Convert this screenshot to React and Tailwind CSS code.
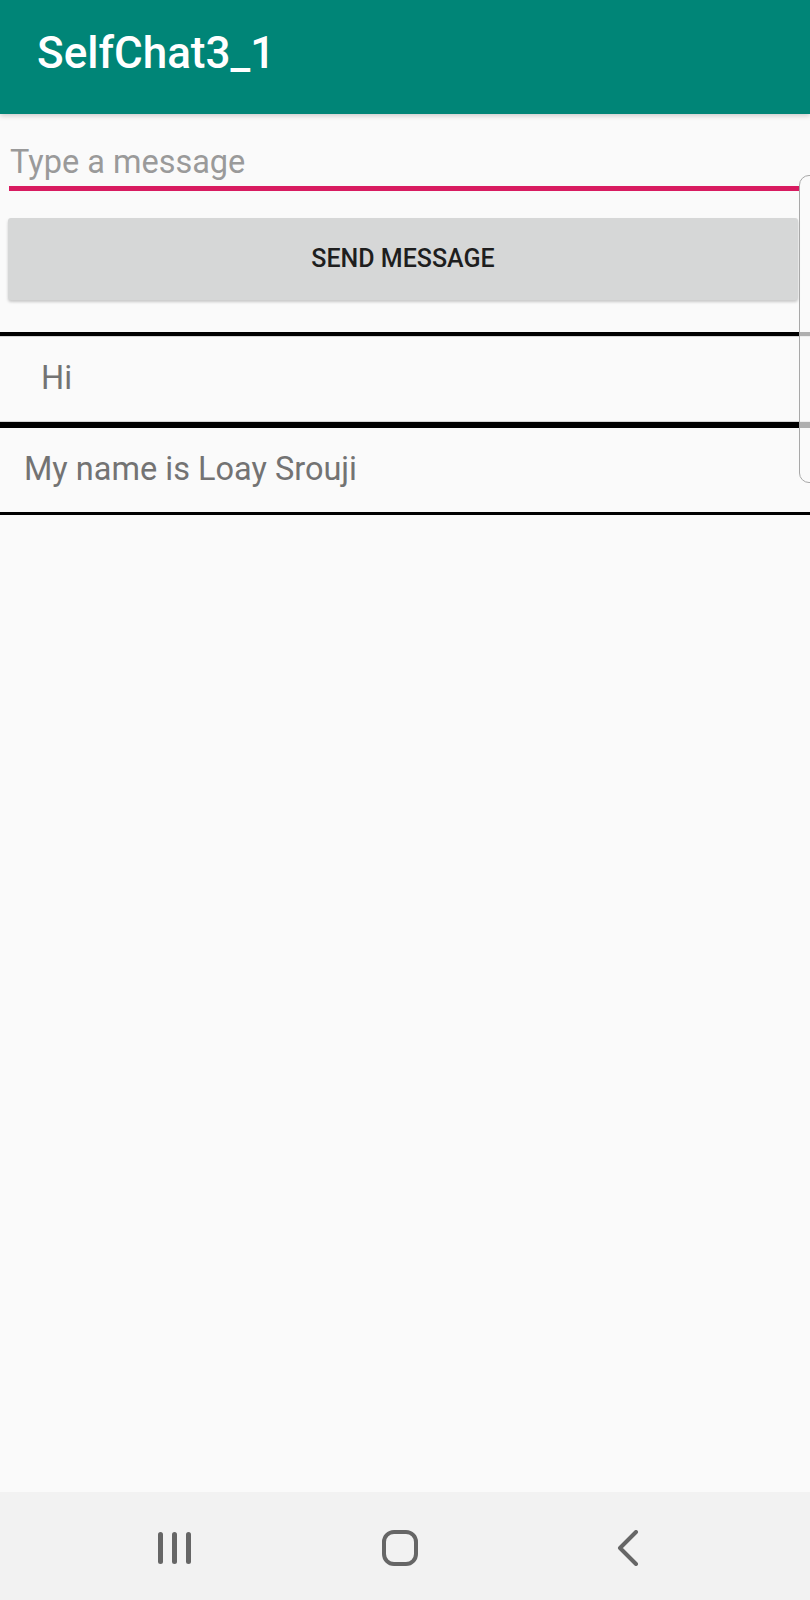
import React from "react";

export default function App() {
  return (
    <div
      className="relative flex min-h-screen flex-col overflow-hidden bg-[#fafafa]"
      style={{ fontFamily: "Roboto, 'Noto Sans', sans-serif" }}
    >
      {/* App bar */}
      <header className="relative z-10 h-[114px] bg-[#008577] pl-[37px] pt-[31px] shadow-[0_2px_5px_rgba(0,0,0,0.18)]">
        <h1 className="text-[44px] font-medium leading-none text-white">SelfChat3_1</h1>
      </header>

      <main className="flex-1">
        {/* Edit text */}
        <div className="ml-[9px] mr-[11px] mt-[32px]">
          <div className="pl-px text-[32.5px] leading-none text-[#9a9a9a]">Type a message</div>
          <div className="mt-[7px] h-[5px] bg-[#d81b60]" />
        </div>

        {/* Button */}
        <div className="ml-[8px] mr-[12px] mt-[27px]">
          <button className="flex h-[82px] w-full items-center justify-center rounded-[3px] bg-[#d6d7d7] text-[25px] font-medium leading-none text-[#1e1e1e] shadow-[0_2px_3px_rgba(0,0,0,0.2)]">
            SEND MESSAGE
          </button>
        </div>

        {/* List */}
        <div className="mt-[32px]">
          <div className="h-[4px] bg-black" />
          <div className="h-px bg-[#d4d4d4]" />
          <div className="flex h-[84px] items-center pl-[41px] text-[32.5px] leading-none text-[#737373]">Hi</div>
          <div className="h-px bg-[#d4d4d4]" />
          <div className="h-[6px] bg-black" />
          <div className="flex h-[84px] items-center pl-[24px] text-[32.5px] leading-none text-[#737373]">
            My name is Loay Srouji
          </div>
          <div className="h-[3px] bg-black" />
        </div>
      </main>

      {/* Navigation bar */}
      <nav className="flex h-[108px] items-center bg-[#f2f2f2] pt-[4px]">
        <div className="ml-[152px] flex w-[40px] justify-center">
          <svg width="40" height="34" viewBox="0 0 40 34">
            <rect x="6" y="1" width="5" height="32" rx="2.5" fill="#666" />
            <rect x="20" y="1" width="5" height="32" rx="2.5" fill="#666" />
            <rect x="34" y="1" width="5" height="32" rx="2.5" fill="#666" />
          </svg>
        </div>
        <div className="ml-[190px] flex w-[36px] justify-center">
          <svg width="36" height="36" viewBox="0 0 36 36">
            <rect x="2" y="2" width="32" height="32" rx="10" fill="none" stroke="#666" strokeWidth="4" />
          </svg>
        </div>
        <div className="ml-[199px] flex w-[22px] justify-center">
          <svg width="22" height="36" viewBox="0 0 22 36">
            <polyline
              points="19,2 3,18 19,34"
              fill="none"
              stroke="#666"
              strokeWidth="4"
              strokeLinecap="round"
              strokeLinejoin="round"
            />
          </svg>
        </div>
      </nav>

      {/* Edge panel handle overlay */}
      <div className="absolute left-[799px] top-[175px] h-[308px] w-[30px] rounded-l-[10px] border border-[#a8a8a8] bg-[rgba(250,250,250,0.7)]" />
    </div>
  );
}
